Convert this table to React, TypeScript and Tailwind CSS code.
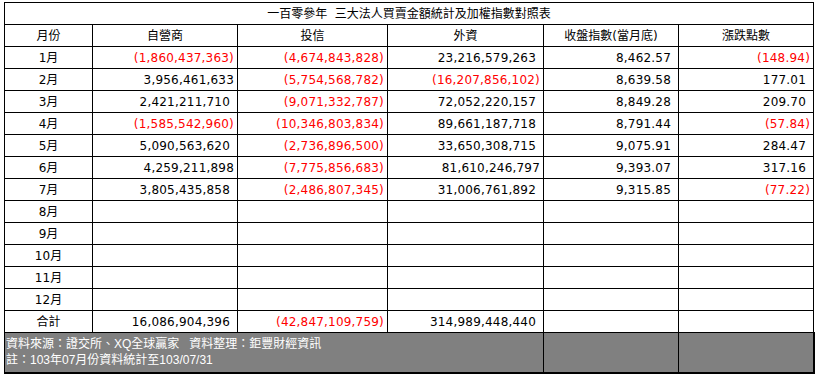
type Cell = { v: string; neg?: boolean; tight?: boolean };

const n = (v: string, tight = false): Cell => ({ v, tight });
const r = (v: string): Cell => ({ v: `(${v})`, neg: true });
const e: Cell = { v: "" };

const rows: { m: string; cells: Cell[] }[] = [
  { m: "1月", cells: [r("1,860,437,363"), r("4,674,843,828"), n("23,216,579,263"), n("8,462.57"), r("148.94")] },
  { m: "2月", cells: [n("3,956,461,633", true), r("5,754,568,782"), r("16,207,856,102"), n("8,639.58"), n("177.01")] },
  { m: "3月", cells: [n("2,421,211,710"), r("9,071,332,787"), n("72,052,220,157"), n("8,849.28"), n("209.70")] },
  { m: "4月", cells: [r("1,585,542,960"), r("10,346,803,834"), n("89,661,187,718"), n("8,791.44"), r("57.84")] },
  { m: "5月", cells: [n("5,090,563,620"), r("2,736,896,500"), n("33,650,308,715"), n("9,075.91"), n("284.47")] },
  { m: "6月", cells: [n("4,259,211,898", true), r("7,775,856,683"), n("81,610,246,797", true), n("9,393.07"), n("317.16")] },
  { m: "7月", cells: [n("3,805,435,858"), r("2,486,807,345"), n("31,006,761,892"), n("9,315.85"), r("77.22")] },
  { m: "8月", cells: [e, e, e, e, e] },
  { m: "9月", cells: [e, e, e, e, e] },
  { m: "10月", cells: [e, e, e, e, e] },
  { m: "11月", cells: [e, e, e, e, e] },
  { m: "12月", cells: [e, e, e, e, e] },
  { m: "合計", cells: [n("16,086,904,396"), r("42,847,109,759"), n("314,989,448,440"), e, e] },
];

const headers = ["月份", "自營商", "投信", "外資", "收盤指數(當月底)", "漲跌點數"];

export default function App() {
  return (
    <div className="min-h-screen bg-white pt-[2px] pl-[4px] font-['DejaVu_Sans','Noto_Sans_CJK_TC',sans-serif] text-[12px] text-black">
      <table className="table-fixed border-collapse w-[809px]">
        <colgroup>
          <col className="w-[88px]" />
          <col className="w-[145px]" />
          <col className="w-[150px]" />
          <col className="w-[156px]" />
          <col className="w-[135px]" />
          <col className="w-[135px]" />
        </colgroup>
        <tbody>
          {/* 標題列 */}
          <tr className="h-[22px]">
            <td colSpan={6} className="border border-black p-0 text-center leading-none">
              一百零參年&nbsp;&nbsp;三大法人買賣金額統計及加權指數對照表
            </td>
          </tr>
          <tr className="h-[22px]">
            {headers.map((h) => (
              <td key={h} className="border border-black p-0 text-center leading-none">
                {h}
              </td>
            ))}
          </tr>
          {rows.map((row) => (
            <tr key={row.m} className="h-[22px]">
              <td className="border border-black p-0 text-center leading-none">{row.m}</td>
              {row.cells.map((c, i) => (
                <td
                  key={i}
                  className={`border border-black p-0 text-right leading-none tracking-[0.2px] ${
                    c.neg ? "text-[#ff0000] pr-[3px]" : c.tight ? "pr-[3px]" : "pr-[7px]"
                  }`}
                >
                  {c.v}
                </td>
              ))}
            </tr>
          ))}
          {/* 資料來源 */}
          <tr className="h-[40px] bg-[#808080]">
            <td
              colSpan={4}
              className="border border-black border-b-2 pl-[1px] py-0 align-middle text-white leading-[16px] font-['Liberation_Sans','Noto_Sans_CJK_TC',sans-serif]"
            >
              <div>資料來源：證交所、XQ全球贏家&nbsp;&nbsp;&nbsp;資料整理：鉅豐財經資訊</div>
              <div>註：103年07月份資料統計至103/07/31</div>
            </td>
            <td className="border border-black border-b-2" />
            <td className="border border-black border-b-2 border-r-2" />
          </tr>
        </tbody>
      </table>
    </div>
  );
}
